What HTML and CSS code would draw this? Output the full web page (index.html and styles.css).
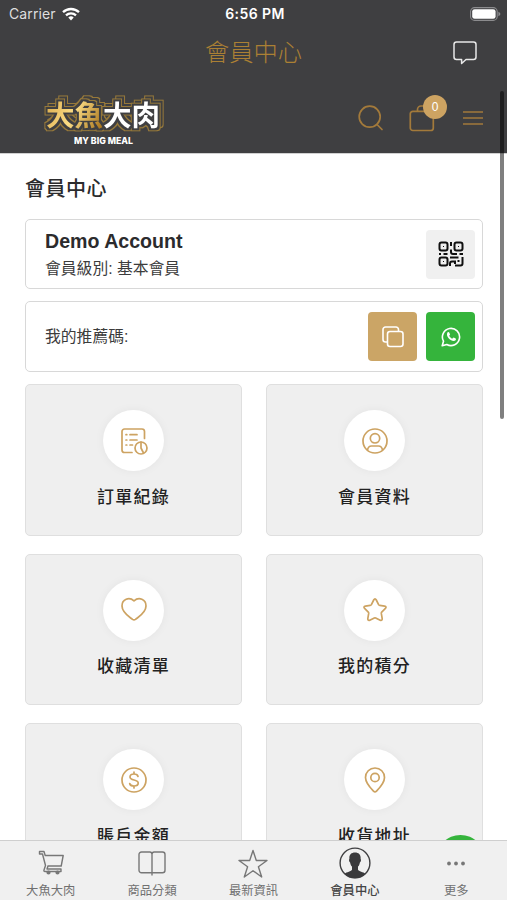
FILE: index.html
```
<!DOCTYPE html>
<html lang="zh-Hant">
<head>
  <meta charset="UTF-8">
  <meta name="viewport" content="width=device-width, initial-scale=1.0">
  <title>會員中心</title>
  <link rel="stylesheet" href="styles.css">
</head>
<body>
  <div class="app">
    <div class="status-bar">
      <div class="carrier">
        <span>Carrier</span>
        <svg width="18" height="14" viewBox="0 0 18 14" fill="none" stroke="#fff" stroke-width="2.3">
          <path d="M1 5.2a11.6 11.6 0 0 1 16 0"/>
          <path d="M4 8.3a7.3 7.3 0 0 1 10 0"/>
          <path d="M6.3 10.6a4 4 0 0 1 5.4 0L9 13.4z" fill="#fff" stroke="none"/>
        </svg>
      </div>
      <div class="time">6:56 PM</div>
      <div class="battery">
        <svg width="31" height="14" viewBox="0 0 31 14">
          <rect x=".6" y=".6" width="26.6" height="12.8" rx="4" fill="none" stroke="#8c8c8e" stroke-width="1.1"/>
          <rect x="2.2" y="2.2" width="23.4" height="9.6" rx="2.4" fill="#fff"/>
          <path d="M28.4 4.7v4.6c1.2-.5 1.9-1.3 1.9-2.3s-.7-1.8-1.9-2.3z" fill="#8c8c8e"/>
        </svg>
      </div>
    </div>

    <div class="nav-bar">
      <h1>會員中心</h1>
      <svg class="chat" width="26" height="26" viewBox="0 0 26 26" fill="none" stroke="#e8e8e8" stroke-width="1.5" stroke-linejoin="round">
        <path d="M4.5 2h17A2.5 2.5 0 0 1 24 4.5V17a2.5 2.5 0 0 1-2.5 2.5H14l-4.400 4v-4H4.5A2.5 2.5 0 0 1 2 17V4.5A2.5 2.5 0 0 1 4.5 2z"/>
      </svg>
    </div>

    <header class="site-header">
      <svg class="logo" width="130" height="54" viewBox="0 0 130 54">
        <defs>
          <linearGradient id="gold" gradientUnits="userSpaceOnUse" x1="8" y1="8" x2="65" y2="36">
            <stop offset="0" stop-color="#d9a94a"/>
            <stop offset=".5" stop-color="#fbdc84"/>
            <stop offset="1" stop-color="#a8741c"/>
          </linearGradient>
          <!-- double gold contour round the lettering -->
          <filter id="contour" x="-10%" y="-30%" width="125%" height="160%" color-interpolation-filters="sRGB">
            <feFlood flood-color="#97793a" result="line"/>
            <feFlood flood-color="#3f3f41" result="back"/>
            <feMorphology in="SourceAlpha" operator="dilate" radius="3" result="d3"/>
            <feMorphology in="SourceAlpha" operator="dilate" radius="2" result="d2"/>
            <feComposite in="line" in2="d3" operator="in" result="outer"/>
            <feComposite in="back" in2="d2" operator="in" result="inner"/>
            <feMerge result="ring">
              <feMergeNode in="outer"/>
              <feMergeNode in="inner"/>
            </feMerge>
            <feOffset in="ring" dx="3" dy="-3" result="ring2"/>
            <feMerge>
              <feMergeNode in="ring2"/>
              <feMergeNode in="ring"/>
              <feMergeNode in="SourceGraphic"/>
            </feMerge>
          </filter>
        </defs>
        <text class="logo-text" x="9" y="35" textLength="114" filter="url(#contour)"><tspan class="gold-fill">大魚</tspan><tspan class="white-fill">大肉</tspan></text>
        <text class="logo-sub" x="37" y="52.5" textLength="59" lengthAdjust="spacingAndGlyphs">MY BIG MEAL</text>
      </svg>
      <div class="header-icons">
        <svg width="26" height="26" viewBox="0 0 26 26" fill="none" stroke="#a37a3b" stroke-width="1.7" stroke-linecap="round">
          <circle cx="11.7" cy="11.7" r="10.5"/>
          <path d="M19 19.500l5 5"/>
        </svg>
        <div class="bag">
          <svg width="26" height="28" viewBox="0 0 26 28" fill="none" stroke="#a37a3b" stroke-width="1.7">
            <rect x="1.3" y="7.3" width="23" height="19.2" rx="2.5"/>
            <path d="M8.5 7V5.5A3.500 3.500 0 0 1 12 2h2a3.500 3.500 0 0 1 3.500 3.500V7"/>
          </svg>
          <span class="badge">0</span>
        </div>
        <svg width="20" height="16" viewBox="0 0 20 16" stroke="#a37a3b" stroke-width="1.7">
          <path d="M0 2h20M0 8h20M0 14h20"/>
        </svg>
      </div>
    </header>

    <main class="content">
      <h2>會員中心</h2>

      <div class="box account">
        <div>
          <div class="name">Demo Account</div>
          <div class="level">會員級別: 基本會員</div>
        </div>
        <div class="square grey">
          <svg width="26" height="26" viewBox="0 0 26 26" fill="none" stroke="#111" stroke-width="2">
            <rect x="1.5" y="1.5" width="8" height="8" rx="2"/>
            <rect x="16.5" y="1.5" width="8" height="8" rx="2"/>
            <rect x="1.5" y="16.5" width="8" height="8" rx="2"/>
            <path d="M5 5.5h1M20 5.5h1M5 20.5h1" stroke-width="1.2"/>
            <path d="M13 1v4M13 8.5V11q0 2 2 2h4M1 13h2M5.5 13h4M21.5 13H25M12 16.5h8.500M12 25v-2.500q0-2 2-2h3V23M17 24.500h5.500q2 0 2-2V16M20.500 19v2"/>
          </svg>
        </div>
      </div>

      <div class="box referral">
        <div class="level">我的推薦碼:</div>
        <div class="actions">
          <div class="square gold">
            <svg width="22" height="22" viewBox="0 0 22 22" fill="none" stroke="#fff" stroke-width="1.6" stroke-linejoin="round">
              <rect x="5.5" y="5.5" width="15.5" height="15" rx="2.5"/>
              <path d="M5.5 16h-2A2.500 2.500 0 0 1 1 13.500v-10A2.500 2.500 0 0 1 3.500 1H14a2.500 2.500 0 0 1 2.500 2.500v2"/>
            </svg>
          </div>
          <div class="square green">
            <svg width="20" height="20" viewBox="0 0 20 20">
              <path d="M1.200 18.800l1.300-4.600a8.600 8.600 0 1 1 3.300 3.300z" fill="none" stroke="#fff" stroke-width="1.6" stroke-linejoin="round"/>
              <path d="M6.700 5.300c.5-.5 1.200-.4 1.500.2l.8 1.800c.2.5-.6 1.200-.8 1.500.7 1.400 1.700 2.300 3.100 2.900.4-.3 1-1.300 1.500-1.100l1.800.9c.6.3.4 1.200 0 1.700-2.800 2.800-9.700-2.900-8.500-6.700.1-.5.3-.9.6-1.200z" fill="#fff"/>
            </svg>
          </div>
        </div>
      </div>

      <div class="grid">
        <div class="card">
          <div class="circle">
            <svg width="28" height="28" viewBox="0 0 28 28">
              <path d="M24.500 11.500v-7A2.500 2.500 0 0 0 22 2H4.500A2.500 2.500 0 0 0 2 4.500V23a2.500 2.500 0 0 0 2.500 2.500H12"/>
              <path d="M10 7.700h7M10 13h7M10 18h2.500M6 7.700h.8M6 13h.8M6 18h.8"/>
              <circle cx="21" cy="21" r="6"/>
              <path d="M21 15v6l2.500 5"/>
            </svg>
          </div>
          <p>訂單紀錄</p>
        </div>
        <div class="card">
          <div class="circle">
            <svg width="28" height="28" viewBox="0 0 28 28">
              <circle cx="14" cy="14" r="12"/>
              <circle cx="14" cy="11.3" r="4.7"/>
              <path d="M6.500 23c.5-2.800 2-4 4-4h7c2 0 3.500 1.200 4 4"/>
            </svg>
          </div>
          <p>會員資料</p>
        </div>
        <div class="card">
          <div class="circle">
            <svg width="28" height="28" viewBox="0 0 28 28">
              <path d="M14 4.900c-5-4.400-12-1.500-12 5 0 6.500 6.500 10.300 10.500 13.500q1.500 1 3 0C19.500 20.200 26 16.400 26 9.900c0-6.500-7-9.400-12-5z"/>
            </svg>
          </div>
          <p>收藏清單</p>
        </div>
        <div class="card">
          <div class="circle">
            <svg width="28" height="28" viewBox="0 0 28 28">
              <path d="M12.700 4q1.300-2.300 2.600 0l2.300 4.600q.4.700 1.200.8l4.800.7q2.400.5.800 2.300l-3.700 3.700q-.5.600-.4 1.300l.9 5.200q.1 2.400-2 1.600L14.700 22q-.7-.3-1.400 0l-4.500 2.200q-2.100.8-2-1.600l.9-5.200q.1-.7-.4-1.300L3.600 12.400q-1.600-1.800.8-2.300l4.800-.7q.8-.1 1.200-.8z"/>
            </svg>
          </div>
          <p>我的積分</p>
        </div>
        <div class="card">
          <div class="circle">
            <svg width="28" height="28" viewBox="0 0 28 28">
              <circle cx="14" cy="14" r="12"/>
              <path d="M18 10.500c-.3-1.700-1.700-2.500-4-2.500s-4 1-4 3c0 4.200 8.200 1.800 8.200 6 0 2-1.800 3-4.200 3s-4-.8-4.300-2.500M14 6v2M14 20v2"/>
            </svg>
          </div>
          <p>賬戶金額</p>
        </div>
        <div class="card">
          <div class="circle">
            <svg width="28" height="28" viewBox="0 0 28 28">
              <path d="M14 2c-5.400 0-9.500 4.200-9.500 9.500 0 5.500 4.500 10 8 13.600q1.500 1.400 3 0c3.500-3.600 8-8.100 8-13.600C23.500 6.200 19.400 2 14 2z"/>
              <circle cx="14" cy="11.5" r="4.2"/>
            </svg>
          </div>
          <p>收貨地址</p>
        </div>
      </div>
      <div class="float-btn"></div>
    </main>

    <nav class="tab-bar">
      <div class="tab">
        <svg width="28" height="32" viewBox="0 0 28 32">
          <path d="M2.500 4.500H7l1.200 4h18l-2 10.500H11l-1 3h14v2.500H8q-1.500 0-1-1.500l1.500-4.500L5.500 7h-3zM10.500 19h13"/>
          <circle cx="11.5" cy="25.5" r="1.4" class="solid-grey"/>
          <circle cx="20.5" cy="25.5" r="1.4" class="solid-grey"/>
        </svg>
        <span>大魚大肉</span>
      </div>
      <div class="tab">
        <svg width="28" height="32" viewBox="0 0 28 32">
          <path d="M14 28.500v-2.700H3.500A2.500 2.500 0 0 1 1 23.300V7.500A2.500 2.500 0 0 1 3.500 5h8.300Q14 5 14 7.200 14 5 16.200 5h8.300A2.500 2.500 0 0 1 27 7.500v15.800a2.500 2.500 0 0 1-2.500 2.500H14V7"/>
        </svg>
        <span>商品分類</span>
      </div>
      <div class="tab">
        <svg width="30" height="32" viewBox="0 0 30 32">
          <path d="M15 3.500l3.300 10H29l-8.600 6.300 3.300 10.200L15 23.700 6.300 30l3.300-10.200L1 13.500h10.700z"/>
        </svg>
        <span>最新資訊</span>
      </div>
      <div class="tab active">
        <svg width="32" height="32" viewBox="0 0 32 32">
          <circle cx="16" cy="16" r="14.9"/>
          <path class="solid" d="M16 5.500c-4 0-6 2.500-5.600 6.500-.8.4-.3 3 .7 3.400.3 2 1 3.300 1.900 4.200v3.200c-.5 1.800-5.500 2-7.500 4.200a15 15 0 0 0 21 0c-2-2.200-7-2.400-7.500-4.200v-3.200c.9-.9 1.600-2.200 1.900-4.200 1-.4 1.500-3 .7-3.400.4-4-1.600-6.500-5.600-6.500z"/>
        </svg>
        <span>會員中心</span>
      </div>
      <div class="tab">
        <svg width="28" height="32" viewBox="0 0 28 32">
          <g class="solid-grey">
            <circle cx="7" cy="16.5" r="1.2"/>
            <circle cx="14" cy="16.5" r="1.2"/>
            <circle cx="21" cy="16.5" r="1.2"/>
          </g>
        </svg>
        <span>更多</span>
      </div>
    </nav>
    <div class="scrollbar"></div>
  </div>
</body>
</html>
```
FILE: styles.css
```
* {
  box-sizing: border-box;
}
body {
  margin: 0;
  font-family: "Liberation Sans", "Noto Sans CJK TC", sans-serif;
  color: #2b2b2d;
  background: #fff;
}
h1, h2, p {
  margin: 0;
}
svg {
  display: block;
  flex-shrink: 0;
}
.app {
  position: relative;
  display: flex;
  flex-direction: column;
  height: 900px;
  overflow: hidden;
}

/* top bars */
.status-bar {
  display: grid;
  grid-template-columns: 1fr auto 1fr;
  align-items: center;
  height: 27px;
  padding: 0 6px 0 9px;
  background: #3f3f41;
  color: #fff;
  font-family: Inter, sans-serif;
  font-size: 14px;
}
.carrier {
  display: flex;
  align-items: center;
  gap: 6px;
  color: #dededf;
  letter-spacing: 0.1px;
}
.time {
  font-weight: 600;
  font-size: 14px;
  letter-spacing: 0.4px;
}
.battery {
  display: flex;
  justify-content: flex-end;
}
.nav-bar {
  display: grid;
  grid-template-columns: 1fr auto 1fr;
  align-items: center;
  height: 51px;
  padding: 0 29px;
  background: #3f3f41;
}
.nav-bar h1 {
  grid-column: 2;
  color: #ab8034;
  font-size: 24.3px;
  font-weight: 300;
  line-height: 40px;
}
.chat {
  justify-self: end;
}
.site-header {
  display: flex;
  justify-content: space-between;
  align-items: center;
  height: 76px;
  padding: 4px 24px 0 37px;
  background: #3f3f41;
  border-bottom: 1px solid #d0d0d0;
}
.logo {
  overflow: visible;
}
.logo-text {
  font-family: "Noto Sans CJK TC", sans-serif;
  font-size: 28.5px;
  font-weight: 700;
}
.gold-fill {
  fill: url(#gold);
}
.white-fill {
  fill: #fff;
}
.logo-sub {
  fill: #fff;
  font-family: Inter, sans-serif;
  font-size: 9px;
  font-weight: 800;
}
.header-icons {
  display: flex;
  align-items: center;
  gap: 28px;
}
.header-icons > svg:first-child {
  margin-right: -3px;
}
.bag {
  position: relative;
}
.badge {
  position: absolute;
  top: -9px;
  left: 14px;
  width: 24px;
  height: 24px;
  border-radius: 50%;
  background: #cda362;
  color: #fff;
  font-size: 12px;
  line-height: 24px;
  text-align: center;
}

/* member page */
.content {
  position: relative;
  flex: 1;
  min-height: 0;
  overflow: hidden;
  padding: 20px 24px 0 25px;
}
.content h2 {
  font-size: 20px;
  font-weight: 500;
  line-height: 30px;
  letter-spacing: 0.5px;
}
.box {
  display: flex;
  justify-content: space-between;
  align-items: center;
  height: 70px;
  padding: 0 7px 0 19px;
  border: 1px solid #d8d8d8;
  border-radius: 5px;
}
.account {
  margin-top: 15px;
}
.referral {
  height: 71px;
  margin-top: 12px;
}
.name {
  font-size: 19.6px;
  font-weight: bold;
  line-height: 27px;
}
.level {
  font-size: 15.8px;
  line-height: 26px;
  color: #3c3c3c;
}
.account .level {
  padding-top: 1px;
  line-height: 25px;
}
.actions {
  display: flex;
  gap: 9px;
}
.square {
  display: flex;
  justify-content: center;
  align-items: center;
  width: 49px;
  height: 49px;
  border-radius: 4px;
}
.grey {
  background: #f0f0f0;
}
.gold {
  background: #cba566;
}
.green {
  background: #35b43c;
}
.grid {
  display: grid;
  grid-template-columns: 1fr 1fr;
  gap: 18px 24px;
  margin-top: 12px;
}
.card {
  display: flex;
  flex-direction: column;
  align-items: center;
  height: 151.7px;
  padding-top: 25px;
  background: #efefef;
  border: 1px solid #dfdfdf;
  border-radius: 5px;
}
.circle {
  display: flex;
  justify-content: center;
  align-items: center;
  width: 61px;
  height: 61px;
  border-radius: 50%;
  background: #fff;
  box-shadow: 0 0 10px rgba(0, 0, 0, 0.05);
}
.circle svg {
  fill: none;
  stroke: #cda362;
  stroke-width: 1.7px;
  stroke-linecap: round;
  stroke-linejoin: round;
}
.card p {
  margin-top: 12.5px;
  font-size: 17px;
  font-weight: 500;
  line-height: 28px;
  letter-spacing: 1.2px;
  color: #222;
}
.float-btn {
  position: absolute;
  right: 22px;
  bottom: -44px;
  width: 49px;
  height: 49px;
  border-radius: 50%;
  background: #35b43c;
}

/* bottom tabs */
.tab-bar {
  display: grid;
  grid-template-columns: repeat(5, 1fr);
  height: 60px;
  background: #f0f0f0;
  border-top: 1px solid #cfcfcf;
}
.tab {
  display: flex;
  flex-direction: column;
  align-items: center;
  gap: 2px;
  padding-top: 6px;
  font-size: 12.3px;
  line-height: 20px;
  color: #707070;
}
.tab svg {
  fill: none;
  stroke: #777;
  stroke-width: 1.4px;
  stroke-linejoin: round;
}
.tab.active {
  color: #444;
  font-weight: 500;
}
.tab.active svg {
  stroke: #3f3f41;
}
.tab .solid {
  fill: #3a3a3c;
  stroke: none;
}
.tab .solid-grey {
  fill: #777;
}
.scrollbar {
  position: absolute;
  top: 91px;
  right: 3px;
  width: 4px;
  height: 328px;
  border-radius: 2px;
  background: rgba(0, 0, 0, 0.5);
}
```
